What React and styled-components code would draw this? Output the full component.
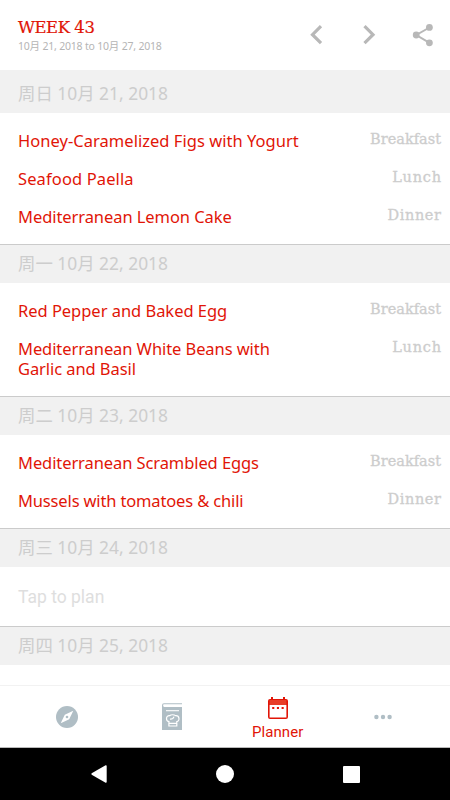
import React from "react";
import styled, { createGlobalStyle } from "styled-components";

const GlobalStyle = createGlobalStyle`
  * {
    box-sizing: border-box;
  }
  body {
    margin: 0;
    background-color: #fff;
    font-family: "Noto Sans", "Noto Sans CJK SC", sans-serif;
  }
  h1, h2, p, ul {
    margin: 0;
    padding: 0;
    font-weight: 400;
  }
  svg {
    display: block;
  }
`;

const Screen = styled.div`
  display: flex;
  flex-direction: column;
  width: 450px;
  height: 800px;
  overflow: hidden;
`;

const Header = styled.header`
  display: flex;
  justify-content: space-between;
  flex: none;
  height: 70px;
  padding: 16px 15px 0 18px;
`;

const WeekTitle = styled.h1`
  color: #e11507;
  font-family: "DejaVu Serif", serif;
  font-size: 16.5px;
  line-height: 24px;
  letter-spacing: -0.45px;
  white-space: nowrap;
  -webkit-text-stroke: 0.2px;
`;

const WeekRange = styled.p`
  color: #b5b5b5;
  font-size: 10.5px;
  line-height: 13px;
  letter-spacing: -0.2px;
  white-space: nowrap;
`;

const Actions = styled.div`
  display: flex;
  align-items: center;
  gap: 29px;
  height: 38px;
`;

const ActionButton = styled.button`
  padding: 0;
  border: none;
  background: none;
  color: #b8b8b8;
`;

const Days = styled.main`
  flex-grow: 1;
  overflow: hidden;
`;

const DayTitle = styled.h2`
  height: ${({ $first }) => ($first ? "43px" : "39px")};
  padding: ${({ $first }) => ($first ? "5px" : "0")} 18px 0;
  border-top: ${({ $first }) => ($first ? "none" : "1px solid #cbcbcb")};
  background-color: #f1f1f1;
  color: #cdcdcd;
  font-size: 17.4px;
  line-height: 36px;
  white-space: nowrap;
`;

const MealList = styled.ul`
  display: flex;
  flex-direction: column;
  gap: 18px;
  padding: 18px 9px 17px 18px;
  list-style: none;
`;

const MealRow = styled.li`
  display: flex;
  justify-content: space-between;
  line-height: 20px;
`;

const Dish = styled.span`
  color: #e11507;
  font-size: 16.5px;
  letter-spacing: ${({ $spacing = 0 }) => $spacing}px;
  white-space: pre-line;
`;

const MealType = styled.span`
  position: relative;
  top: -2px;
  color: #cdcdcd;
  font-family: "DejaVu Serif", serif;
  font-size: 14.5px;
  letter-spacing: ${({ $spacing = 0 }) => $spacing}px;
  margin-right: ${({ $spacing = 0 }) => -$spacing}px;
  -webkit-text-stroke: 0.3px;
`;

const EmptyDay = styled.p`
  height: 59px;
  padding: 0 18px;
  color: #dedede;
  font-family: Roboto, sans-serif;
  font-size: 17.5px;
  line-height: 60px;
`;

const TabBar = styled.nav`
  display: grid;
  grid-template-columns: repeat(4, 105.4px);
  justify-content: center;
  flex: none;
  height: 63px;
  border-top: 1px solid #f2f2f2;
  border-bottom: 1px solid #b9b9b9;
`;

const Tab = styled.a`
  display: flex;
  flex-direction: column;
  align-items: center;
  justify-content: ${({ $active }) => ($active ? "flex-start" : "center")};
  gap: 3px;
  padding-top: ${({ $active }) => ($active ? "11px" : "0")};
  color: ${({ $active }) => ($active ? "#e11507" : "#b0bec5")};
  font-family: Roboto, sans-serif;
  font-size: 15px;
  line-height: 20px;
  letter-spacing: 0.1px;
`;

const SystemBar = styled.footer`
  display: grid;
  grid-template-columns: repeat(3, 126.5px);
  justify-content: center;
  justify-items: center;
  align-items: center;
  flex: none;
  height: 52px;
  background-color: #000;
  color: #fff;
`;

const ChevronIcon = ({ right }) => (
  <svg width="24" height="24" viewBox="0 0 24 24" fill="none">
    <path
      d={right ? "M6.5 3.2 15 11.7 6.5 20.2" : "M16 3.2 7.5 11.7 16 20.2"}
      stroke="currentColor"
      strokeWidth="3.2"
    />
  </svg>
);

const ShareIcon = () => (
  <svg width="24" height="24" viewBox="0 0 24 24" fill="currentColor">
    <path
      d="M18.5 4.5 5.3 12 18.5 19.8"
      fill="none"
      stroke="currentColor"
      strokeWidth="2"
    />
    <circle cx="18.4" cy="4.4" r="3.4" />
    <circle cx="5.2" cy="12" r="3.4" />
    <circle cx="18.4" cy="19.8" r="3.4" />
  </svg>
);

const CompassIcon = () => (
  <svg width="22" height="22" viewBox="0 0 22 22">
    <circle cx="11" cy="11" r="11" fill="currentColor" />
    <path d="M17.3 4.7 13.2 13.2 4.7 17.3 8.8 8.8Z" fill="#fff" />
    <circle cx="11" cy="11" r="1.3" fill="currentColor" />
  </svg>
);

const CookbookIcon = () => (
  <svg width="20" height="27" viewBox="0 0 20 27" fill="none">
    <path
      d="M0 2.2Q0 .2 2 .2H20V1.2H2Q1.1 1.2 1.1 2.2T2 3.9H20V27H0Z"
      fill="currentColor"
    />
    <path d="M4 7.7H17" stroke="#fff" strokeWidth="1.1" />
    <path
      d="M6.9 23V18.6C3.6 18.2 3.6 12.4 7.6 12.7C9 11.4 12.2 11.4 13.5 12.7C17.8 12.3 18 18.2 14.8 18.6V23ZM7 20.3H14.5M8 16.2Q11.2 16.4 12 13.6"
      stroke="#fff"
      strokeWidth="1.2"
    />
  </svg>
);

const CalendarIcon = () => (
  <svg width="20" height="22" viewBox="0 0 20 22">
    <path
      d="M3 0H5V2H15V0H17V2H18Q20 2 20 4V20Q20 22 18 22H2Q0 22 0 20V4Q0 2 2 2H3ZM1.6 8V20.4H18.4V8Z"
      fill="currentColor"
      fillRule="evenodd"
    />
    <path d="M1.6 3H18.4V8H1.6Z" fill="#e83e28" />
    <path d="M4.2 10h2.1v2H4.2zM8.9 10H11v2H8.9zM13.6 10h2.1v2h-2.1z" fill="currentColor" />
  </svg>
);

const MoreIcon = () => (
  <svg width="18" height="6" viewBox="0 0 18 6" fill="currentColor">
    <circle cx="2.4" cy="3" r="2.2" />
    <circle cx="9" cy="3" r="2.2" />
    <circle cx="15.6" cy="3" r="2.2" />
  </svg>
);

const typeSpacing = { Breakfast: 0, Lunch: 0.75, Dinner: 0.6 };

const days = [
  {
    title: "周日 10月 21, 2018",
    meals: [
      { dish: "Honey-Caramelized Figs with Yogurt", type: "Breakfast", spacing: 0.03 },
      { dish: "Seafood Paella", type: "Lunch", spacing: 0.12 },
      { dish: "Mediterranean Lemon Cake", type: "Dinner", spacing: -0.07 },
    ],
  },
  {
    title: "周一 10月 22, 2018",
    meals: [
      { dish: "Red Pepper and Baked Egg", type: "Breakfast", spacing: -0.03 },
      {
        dish: "Mediterranean White Beans with\nGarlic and Basil",
        type: "Lunch",
        spacing: -0.08,
      },
    ],
  },
  {
    title: "周二 10月 23, 2018",
    meals: [
      { dish: "Mediterranean Scrambled Eggs", type: "Breakfast", spacing: -0.09 },
      { dish: "Mussels with tomatoes & chili", type: "Dinner", spacing: -0.15 },
    ],
  },
  { title: "周三 10月 24, 2018", meals: [], hint: "Tap to plan" },
  { title: "周四 10月 25, 2018", meals: [] },
];

const Day = ({ day, first }) => (
  <section>
    <DayTitle $first={first}>{day.title}</DayTitle>
    {day.meals.length > 0 && (
      <MealList>
        {day.meals.map((meal) => (
          <MealRow key={meal.dish}>
            <Dish $spacing={meal.spacing}>{meal.dish}</Dish>
            <MealType $spacing={typeSpacing[meal.type]}>{meal.type}</MealType>
          </MealRow>
        ))}
      </MealList>
    )}
    {day.hint && <EmptyDay>{day.hint}</EmptyDay>}
  </section>
);

export default function App() {
  return (
    <Screen>
      <GlobalStyle />
      <Header>
        <div>
          <WeekTitle>WEEK 43</WeekTitle>
          <WeekRange>10月 21, 2018 to 10月 27, 2018</WeekRange>
        </div>
        <Actions>
          <ActionButton aria-label="Previous week">
            <ChevronIcon />
          </ActionButton>
          <ActionButton aria-label="Next week">
            <ChevronIcon right />
          </ActionButton>
          <ActionButton aria-label="Share">
            <ShareIcon />
          </ActionButton>
        </Actions>
      </Header>
      <Days>
        {days.map((day, index) => (
          <Day key={day.title} day={day} first={index === 0} />
        ))}
      </Days>
      <TabBar>
        <Tab>
          <CompassIcon />
        </Tab>
        <Tab>
          <CookbookIcon />
        </Tab>
        <Tab $active>
          <CalendarIcon />
          Planner
        </Tab>
        <Tab>
          <MoreIcon />
        </Tab>
      </TabBar>
      <SystemBar>
        <svg width="16" height="18" viewBox="0 0 16 18" fill="currentColor">
          <path d="M.7 8.2Q0 9 .7 9.8L14.6 17.8Q15.7 18 15.7 17V1Q15.7 0 14.6.2Z" />
        </svg>
        <svg width="18" height="18" viewBox="0 0 18 18" fill="currentColor">
          <circle cx="9" cy="9" r="9" />
        </svg>
        <svg width="17" height="17" viewBox="0 0 17 17" fill="currentColor">
          <rect width="17" height="17" rx="1" />
        </svg>
      </SystemBar>
    </Screen>
  );
}
